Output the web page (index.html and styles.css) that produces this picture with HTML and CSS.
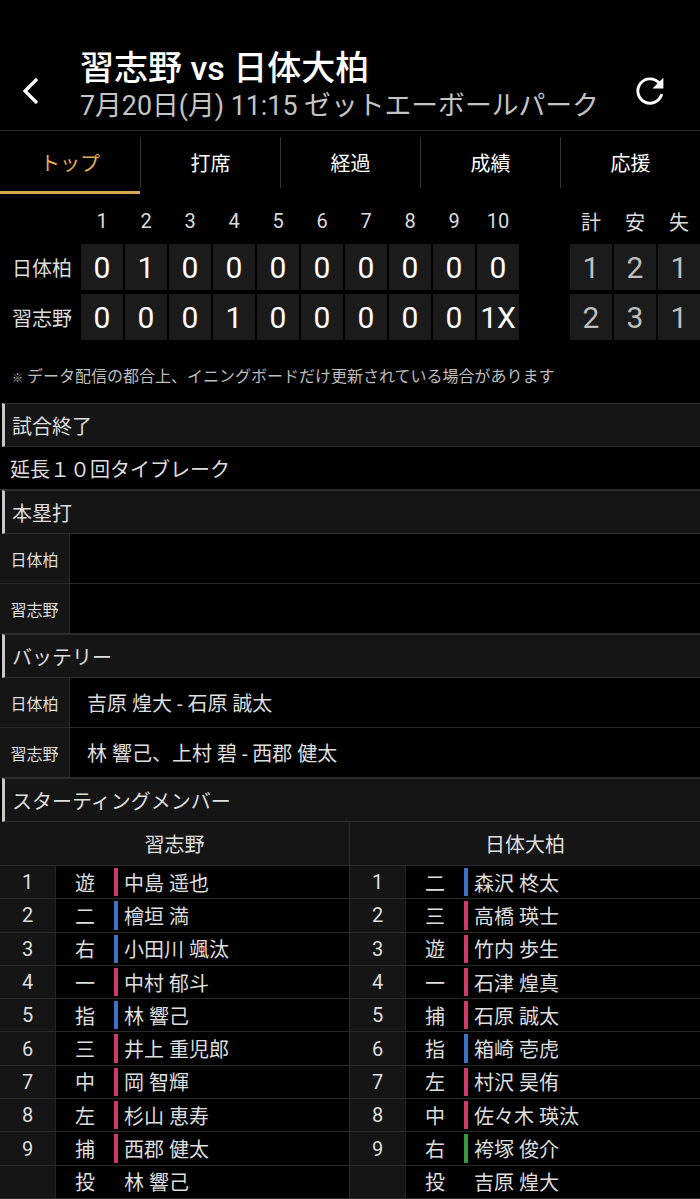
FILE: index.html
```html
<!DOCTYPE html>
<html lang="ja">
<head>
    <meta charset="UTF-8">
    <meta name="viewport" content="width=device-width, initial-scale=1.0">
    <title>習志野 vs 日体大柏</title>

    <link rel="stylesheet" href="styles.css">
</head>
<body>
<!-- Match header -->
<header class="match-head">
    <button class="icon-btn back" type="button" aria-label="戻る">
        <svg width="22" height="30" viewBox="0 0 22 30"><polyline points="17,3 5,15 17,27" fill="none" stroke="#fff" stroke-width="3.2"/></svg>
    </button>
    <div class="match-title">
        <h1>習志野 vs 日体大柏</h1>
        <p>7月20日(月) 11:15 ゼットエーボールパーク</p>
    </div>
    <button class="icon-btn reload" type="button" aria-label="更新">
        <svg width="34" height="34" viewBox="0 0 28 28">
            <path d="M21.66 7.57A10 10 0 1 0 23.66 16.59" fill="none" stroke="#fff" stroke-width="2.4"/>
            <polygon points="25,3 25,12 16,12" fill="#fff"/>
        </svg>
    </button>
</header>

<!-- Tabs -->
<nav class="tabs">
    <a class="tab active"><span class="tab-label">トップ</span><span class="tab-line"></span></a>
    <a class="tab"><span class="tab-label">打席</span><span class="tab-line"></span></a>
    <a class="tab"><span class="tab-label">経過</span><span class="tab-line"></span></a>
    <a class="tab"><span class="tab-label">成績</span><span class="tab-line"></span></a>
    <a class="tab"><span class="tab-label">応援</span><span class="tab-line"></span></a>
</nav>

<!-- Inning board -->
<section class="board">
    <div class="b-team"></div>
    <div class="b-num">1</div><div class="b-num">2</div><div class="b-num">3</div><div class="b-num">4</div><div class="b-num">5</div>
    <div class="b-num">6</div><div class="b-num">7</div><div class="b-num">8</div><div class="b-num">9</div><div class="b-num">10</div>
    <div></div>
    <div class="b-num">計</div><div class="b-num">安</div><div class="b-num">失</div>

    <div class="b-team">日体柏</div>
    <div class="b-cell">0</div><div class="b-cell">1</div><div class="b-cell">0</div><div class="b-cell">0</div><div class="b-cell">0</div>
    <div class="b-cell">0</div><div class="b-cell">0</div><div class="b-cell">0</div><div class="b-cell">0</div><div class="b-cell">0</div>
    <div></div>
    <div class="b-cell total">1</div><div class="b-cell total">2</div><div class="b-cell total">1</div>

    <div class="b-team">習志野</div>
    <div class="b-cell">0</div><div class="b-cell">0</div><div class="b-cell">0</div><div class="b-cell">1</div><div class="b-cell">0</div>
    <div class="b-cell">0</div><div class="b-cell">0</div><div class="b-cell">0</div><div class="b-cell">0</div><div class="b-cell">1X</div>
    <div></div>
    <div class="b-cell total">2</div><div class="b-cell total">3</div><div class="b-cell total">1</div>
</section>

<p class="note"><span class="kome">※</span> データ配信の都合上、イニングボードだけ更新されている場合があります</p>

<!-- Game info -->
<div class="sec-head">試合終了</div>
<div class="sec-row">延長１０回タイブレーク</div>

<div class="sec-head">本塁打</div>
<div class="kv"><div class="kv-key">日体柏</div><div class="kv-val"></div></div>
<div class="kv"><div class="kv-key">習志野</div><div class="kv-val"></div></div>

<div class="sec-head">バッテリー</div>
<div class="kv"><div class="kv-key">日体柏</div><div class="kv-val">吉原 煌大 - 石原 誠太</div></div>
<div class="kv"><div class="kv-key">習志野</div><div class="kv-val">林 響己、上村 碧 - 西郡 健太</div></div>

<div class="sec-head">スターティングメンバー</div>
<div class="lineup">
    <div class="team-col">
        <div class="team-name">習志野</div>
        <div class="player"><span class="order">1</span><span class="pos">遊</span><span class="bar red"></span><span class="name">中島 遥也</span></div>
        <div class="player"><span class="order">2</span><span class="pos">二</span><span class="bar blue"></span><span class="name">檜垣 満</span></div>
        <div class="player"><span class="order">3</span><span class="pos">右</span><span class="bar blue"></span><span class="name">小田川 颯汰</span></div>
        <div class="player"><span class="order">4</span><span class="pos">一</span><span class="bar red"></span><span class="name">中村 郁斗</span></div>
        <div class="player"><span class="order">5</span><span class="pos">指</span><span class="bar blue"></span><span class="name">林 響己</span></div>
        <div class="player"><span class="order">6</span><span class="pos">三</span><span class="bar red"></span><span class="name">井上 重児郎</span></div>
        <div class="player"><span class="order">7</span><span class="pos">中</span><span class="bar red"></span><span class="name">岡 智輝</span></div>
        <div class="player"><span class="order">8</span><span class="pos">左</span><span class="bar red"></span><span class="name">杉山 恵寿</span></div>
        <div class="player"><span class="order">9</span><span class="pos">捕</span><span class="bar red"></span><span class="name">西郡 健太</span></div>
        <div class="player"><span class="order"></span><span class="pos">投</span><span class="bar"></span><span class="name">林 響己</span></div>
    </div>
    <div class="team-col">
        <div class="team-name">日体大柏</div>
        <div class="player"><span class="order">1</span><span class="pos">二</span><span class="bar blue"></span><span class="name">森沢 柊太</span></div>
        <div class="player"><span class="order">2</span><span class="pos">三</span><span class="bar red"></span><span class="name">高橋 瑛士</span></div>
        <div class="player"><span class="order">3</span><span class="pos">遊</span><span class="bar red"></span><span class="name">竹内 歩生</span></div>
        <div class="player"><span class="order">4</span><span class="pos">一</span><span class="bar red"></span><span class="name">石津 煌真</span></div>
        <div class="player"><span class="order">5</span><span class="pos">捕</span><span class="bar red"></span><span class="name">石原 誠太</span></div>
        <div class="player"><span class="order">6</span><span class="pos">指</span><span class="bar blue"></span><span class="name">箱崎 壱虎</span></div>
        <div class="player"><span class="order">7</span><span class="pos">左</span><span class="bar red"></span><span class="name">村沢 昊侑</span></div>
        <div class="player"><span class="order">8</span><span class="pos">中</span><span class="bar red"></span><span class="name">佐々木 瑛汰</span></div>
        <div class="player"><span class="order">9</span><span class="pos">右</span><span class="bar green"></span><span class="name">袴塚 俊介</span></div>
        <div class="player"><span class="order"></span><span class="pos">投</span><span class="bar"></span><span class="name">吉原 煌大</span></div>
    </div>
</div>
</body>
</html>
```

FILE: styles.css
```css
* {
    box-sizing: border-box;
}

body {
    margin: 0;
    background: #000;
    color: #dedede;
    font-family: Roboto, "Noto Sans CJK JP", sans-serif;
}

/* header */
.match-head {
    display: flex;
    align-items: center;
    padding: 48px 0 8px 0;
    border-bottom: 1px solid #2a2a2a;
}

.icon-btn {
    background: none;
    border: none;
    padding: 0;
    margin-top: 12px;
    display: flex;
}

.back {
    width: 80px;
    padding-left: 20px;
}

.reload {
    margin-right: 33px;
}

.match-title {
    flex: 1;
}

.match-title h1 {
    margin: 0;
    font-size: 34px;
    line-height: 40px;
    font-weight: 500;
    color: #fff;
}

.match-title p {
    margin: 2px 0 0 0;
    font-size: 26.8px;
    line-height: 32px;
    color: #c4c4c4;
}

/* tabs */
.tabs {
    display: flex;
    height: 63px;
}

.tab {
    flex: 1;
    display: flex;
    flex-direction: column;
    color: #fff;
    font-size: 20px;
}

.tab-label {
    flex: 1;
    margin-top: 6px;
    display: flex;
    align-items: center;
    justify-content: center;
}

.tab + .tab .tab-label {
    border-left: 1px solid #333;
}

.tab-line {
    height: 3px;
    margin-top: 3px;
}

.tab.active {
    color: #e3ad55;
}

.tab.active .tab-line {
    background: #d9a650;
}

/* inning board */
.board {
    display: grid;
    grid-template-columns: 79px repeat(10, 42px) 47px repeat(3, 42px);
    grid-template-rows: 38px 46px 46px;
    column-gap: 2px;
    row-gap: 4px;
    padding-top: 8px;
}

.b-num {
    display: flex;
    align-items: center;
    justify-content: center;
    font-size: 20px;
    color: #dcdcdc;
}

.b-team {
    display: flex;
    align-items: center;
    padding-left: 12px;
    font-size: 20px;
    color: #dcdcdc;
}

.b-cell {
    display: flex;
    align-items: center;
    justify-content: center;
    background: #1b1b1b;
    font-size: 30px;
    color: #fff;
}

.b-cell.total {
    color: #bdbdbd;
}

.note {
    margin: 26px 0 13px 0;
    padding-left: 12px;
    font-size: 16px;
    line-height: 22px;
    color: #bdbdbd;
}

.kome {
    font-size: 11px;
}

/* sections */
.sec-head {
    display: flex;
    align-items: center;
    height: 44px;
    margin-left: 2px;
    padding-left: 7px;
    background: #151515;
    border-top: 1px solid #2e2e2e;
    border-bottom: 1px solid #2e2e2e;
    border-left: 3px solid #c8c8c8;
    font-size: 20px;
}

.sec-row {
    display: flex;
    align-items: center;
    height: 43px;
    padding-left: 10px;
    border-bottom: 1px solid #2a2a2a;
    font-size: 20px;
}

.kv {
    display: flex;
    height: 50px;
    border-bottom: 1px solid #2a2a2a;
}

.kv-key {
    width: 70px;
    display: flex;
    align-items: center;
    justify-content: center;
    background: #151515;
    border-right: 1px solid #2a2a2a;
    font-size: 16px;
}

.kv-val {
    flex: 1;
    display: flex;
    align-items: center;
    padding-left: 17px;
    font-size: 20px;
}

/* starting members */
.lineup {
    display: grid;
    grid-template-columns: 350px 350px;
}

.team-col:first-child {
    border-right: 1px solid #2a2a2a;
}

.team-name {
    height: 44px;
    display: flex;
    align-items: center;
    justify-content: center;
    background: #151515;
    border-bottom: 1px solid #2a2a2a;
    font-size: 20px;
}

.player {
    display: flex;
    height: 33.3px;
    border-bottom: 1px solid #2a2a2a;
    font-size: 20px;
}

.order {
    width: 56px;
    display: flex;
    align-items: center;
    justify-content: center;
    background: #151515;
    border-right: 1px solid #222;
}

.pos {
    width: 58px;
    display: flex;
    align-items: center;
    justify-content: center;
}

.bar {
    width: 4px;
    margin: 2px 0;
}

.bar.red {
    background: #cf3a69;
}

.bar.blue {
    background: #3c72c6;
}

.bar.green {
    background: #3a9a42;
}

.name {
    display: flex;
    align-items: center;
    padding-left: 6px;
}
```
